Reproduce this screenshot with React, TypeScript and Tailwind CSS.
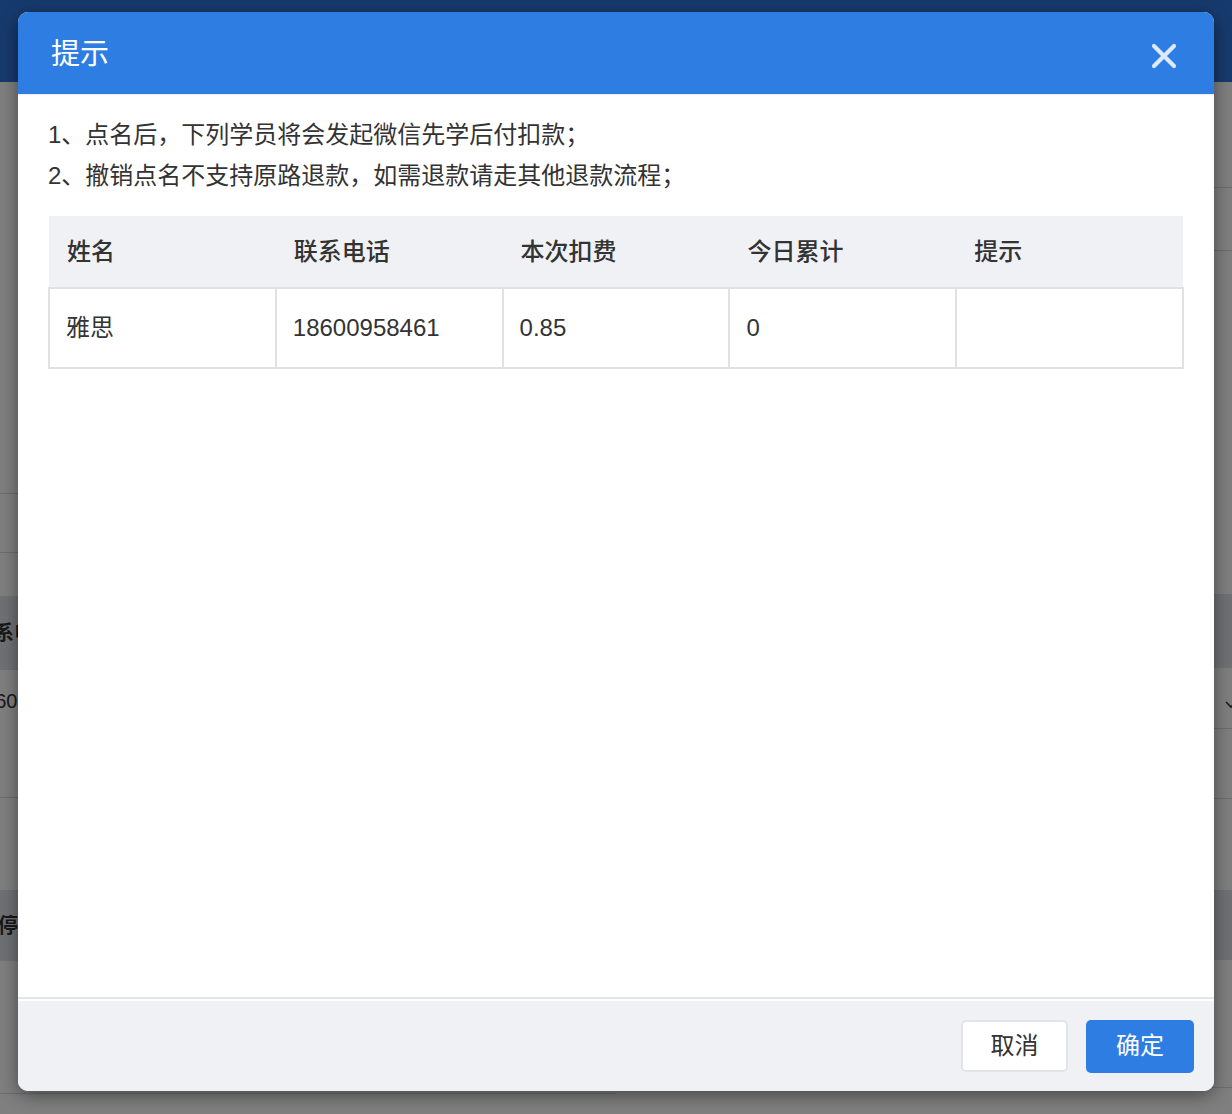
import React from "react"

const columns = ["姓名", "联系电话", "本次扣费", "今日累计", "提示"]
const rows = [["雅思", "18600958461", "0.85", "0", ""]]

const PageBehind = () => {
  return (
    <div className="flex flex-col w-full h-full bg-white text-[20px] text-[#333]">
      <div className="h-[82px] shrink-0 bg-[#2e74dc]" />
      <div className="flex flex-1">
        {/* left part of the page */}
        <div className="w-[616px] flex flex-col overflow-hidden">
          <div className="h-[412px] border-b border-[#d8dbe0]" />
          <div className="h-[59px] border-b border-[#d8dbe0]" />
          <div className="h-[43px]" />
          <div className="h-[74px] bg-[#dee2e8] flex items-center">
            <span className="-ml-[26px] font-semibold whitespace-nowrap">联系电话</span>
          </div>
          <div className="h-[128px] border-b border-[#d8dbe0] pt-[16px] whitespace-nowrap">
            <span className="-ml-[27px] inline-block">18600958461</span>
          </div>
          <div className="h-[92px]" />
          <div className="h-[71px] bg-[#dee2e8] flex items-center">
            <span className="-ml-[22px] font-semibold whitespace-nowrap">暂停</span>
          </div>
          <div className="h-[133px] border-b border-[#d8dbe0]" />
        </div>
        {/* right part of the page */}
        <div className="flex-1 flex flex-col overflow-hidden">
          <div className="h-[106px] border-b border-[#d8dbe0]" />
          <div className="h-[63px] border-b border-[#d8dbe0]" />
          <div className="h-[343px]" />
          <div className="h-[74px] bg-[#dee2e8]" />
          <div className="h-[61px] border-b border-[#d8dbe0] flex items-center justify-end">
            <svg width="14" height="14" viewBox="0 0 14 14" className="-mr-[6px] mt-[14px]">
              <path d="M2 4 L7 9 L12 4" fill="none" stroke="#333" strokeWidth="1.6" />
            </svg>
          </div>
          <div className="h-[70px] border-b border-[#d8dbe0]" />
          <div className="h-[91px]" />
          <div className="h-[70px] bg-[#dee2e8]" />
          <div className="h-[128px] border-b border-[#d8dbe0]" />
        </div>
      </div>
    </div>
  )
}

const CloseIcon = () => (
  <svg width="26" height="26" viewBox="0 0 26 26">
    <path d="M3 3 L23 23 M23 3 L3 23" stroke="#dde9fb" strokeWidth="4.2" strokeLinecap="round" />
  </svg>
)

export default function App() {
  return (
    <div
      className="relative w-full h-[1114px] overflow-hidden"
      style={{ fontFamily: '"Liberation Sans", "Noto Sans CJK SC", sans-serif' }}
    >
      <PageBehind />
      <div className="absolute inset-0 bg-black/50" />

      <div className="absolute left-[18px] top-[12px] w-[1196px] h-[1079px] flex flex-col rounded-[10px] overflow-hidden bg-white shadow-[0_4px_18px_rgba(0,0,0,0.45)]">
        <div className="h-[83px] shrink-0 bg-[#2e7de3] flex items-center justify-between pl-[33px] pr-[37px] border-b border-[#e8f0fb]">
          <h2 className="text-[29px] text-white leading-none mt-[3px]">提示</h2>
          <button className="mt-[5px]">
            <CloseIcon />
          </button>
        </div>

        <div className="flex-1 px-[30px] pt-[19px] text-[#333]">
          <div className="text-[24px] leading-[41px]">
            <p>1、点名后，下列学员将会发起微信先学后付扣款；</p>
            <p>2、撤销点名不支持原路退款，如需退款请走其他退款流程；</p>
          </div>

          <table className="mt-[20px] w-full table-fixed border-collapse text-[24px]">
            <thead>
              <tr className="h-[72px] bg-[#f0f1f5]">
                {columns.map((c) => (
                  <th key={c} className="text-left font-medium pl-[18px]">
                    {c}
                  </th>
                ))}
              </tr>
            </thead>
            <tbody>
              {rows.map((r, i) => (
                <tr key={i} className="h-[80px]">
                  {r.map((v, j) => (
                    <td key={j} className="border-2 border-[#e0e1e4] pl-[16px]">
                      {v}
                    </td>
                  ))}
                </tr>
              ))}
            </tbody>
          </table>
        </div>

        <div className="h-[94px] shrink-0 bg-[#f0f1f5] border-t-2 border-[#e2e5ea] shadow-[inset_0_2px_0_#ffffff] flex items-center justify-end gap-[18px] pr-[20px] pt-[2px]">
          <button className="w-[107px] h-[52px] rounded-[5px] bg-white border-2 border-[#e1e3e9] text-[24px] text-[#333]">
            取消
          </button>
          <button className="w-[108px] h-[53px] rounded-[5px] bg-[#2e7de3] text-[24px] text-white">
            确定
          </button>
        </div>
      </div>
    </div>
  )
}
